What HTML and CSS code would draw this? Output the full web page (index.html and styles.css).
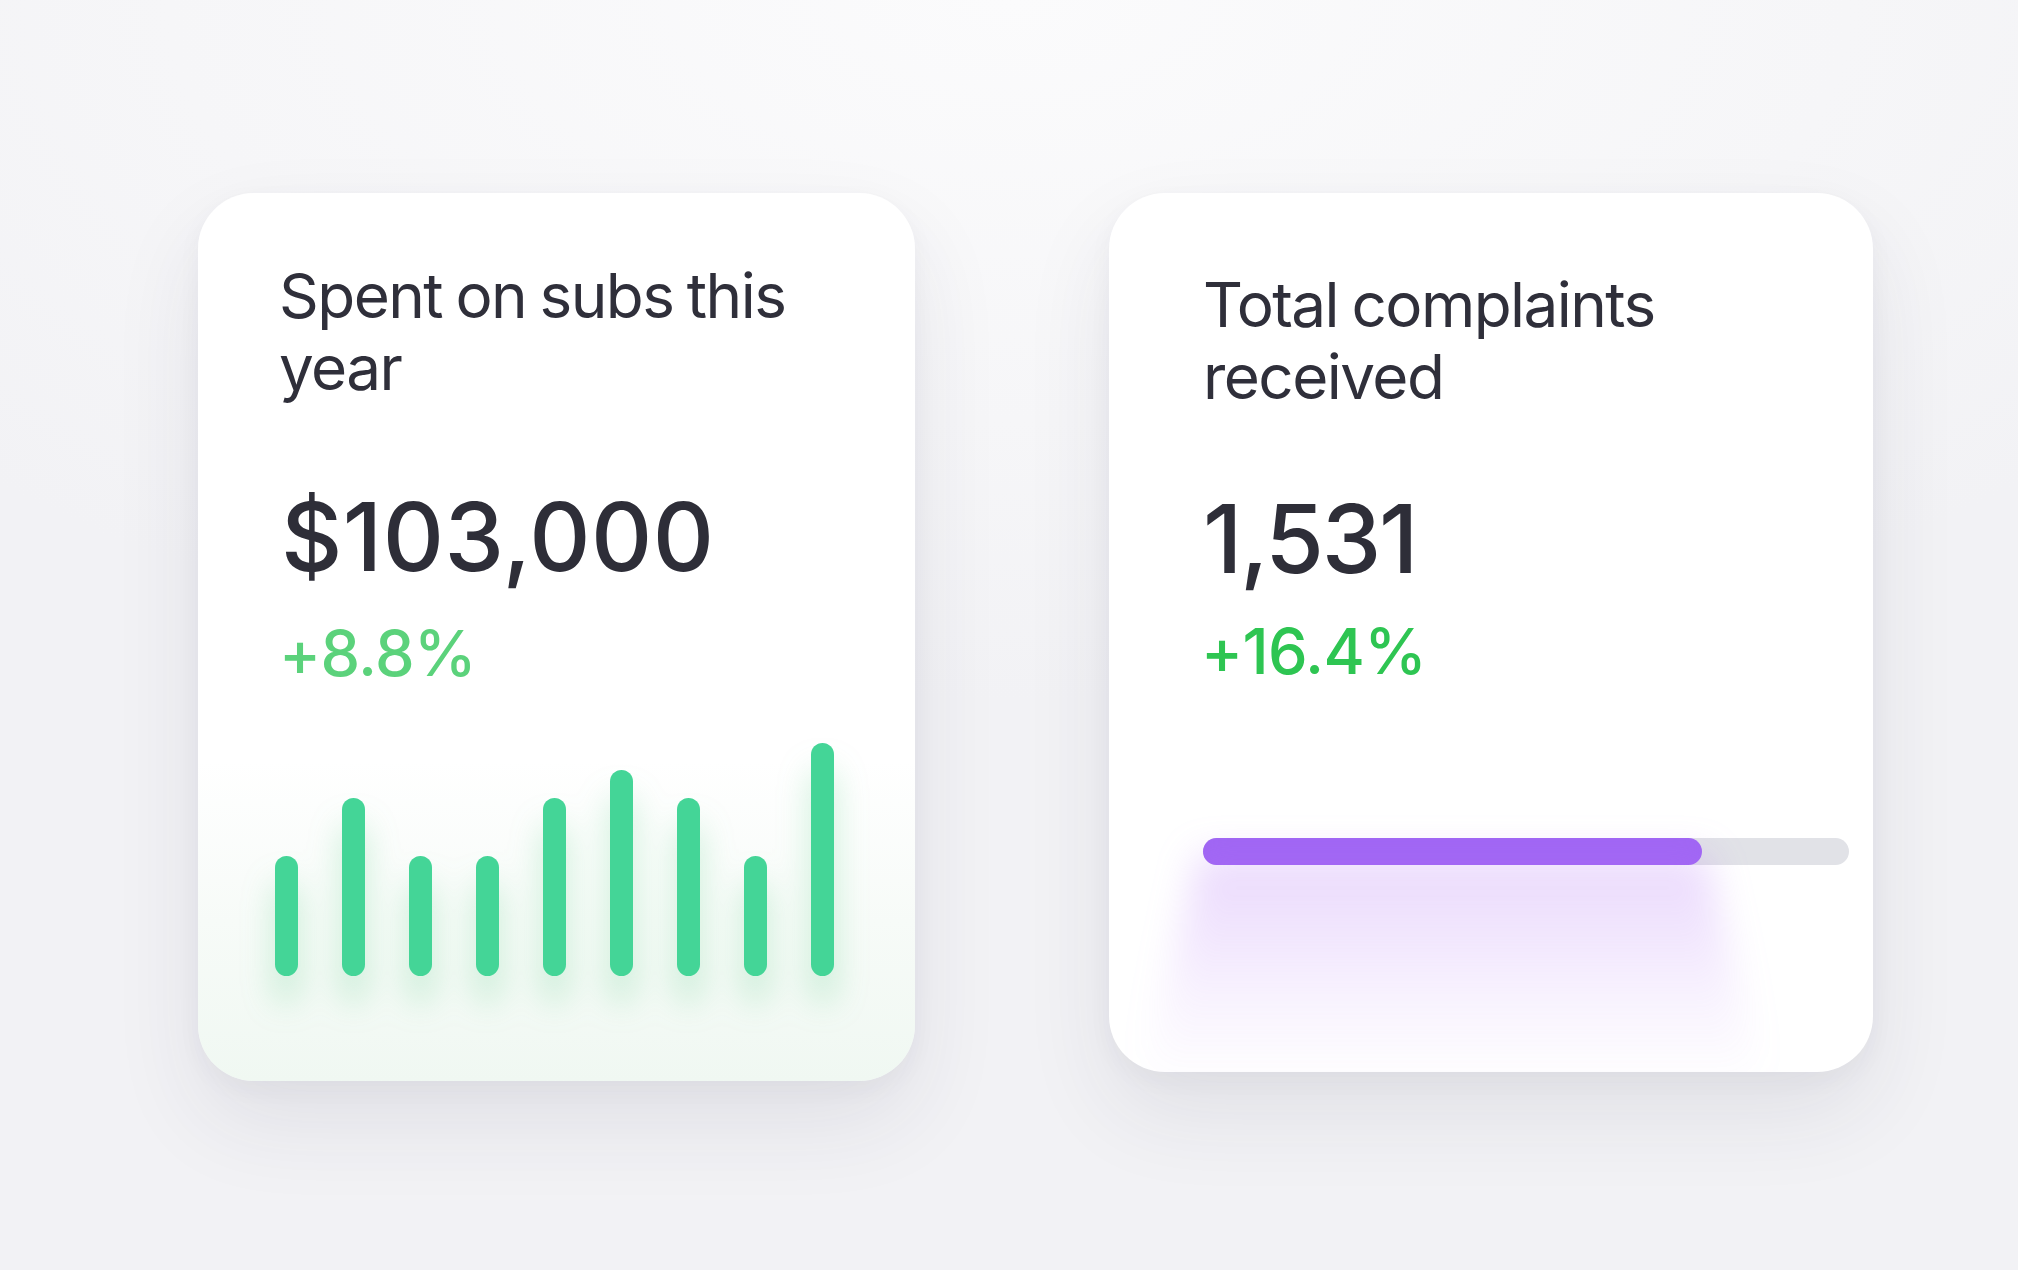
FILE: index.html
```html
<!DOCTYPE html>
<html lang="en">
<head>
<meta charset="utf-8">
<title>Stats</title>
<link rel="stylesheet" href="styles.css">
</head>
<body>
<main class="stage">
  <section class="card card-spend">
    <h2 class="card-title">Spent on subs this year</h2>
    <div class="card-value">$103,000</div>
    <div class="card-delta delta-soft">+8.8%</div>
    <div class="bars">
      <span class="bar" style="height:120px"></span>
      <span class="bar" style="height:178px"></span>
      <span class="bar" style="height:120px"></span>
      <span class="bar" style="height:120px"></span>
      <span class="bar" style="height:178px"></span>
      <span class="bar" style="height:206px"></span>
      <span class="bar" style="height:178px"></span>
      <span class="bar" style="height:120px"></span>
      <span class="bar" style="height:233px"></span>
    </div>
  </section>
  <section class="card card-complaints">
    <h2 class="card-title">Total complaints received</h2>
    <div class="card-value">1,531</div>
    <div class="card-delta delta-strong">+16.4%</div>
    <div class="progress">
      <div class="progress-fill" style="width:77.2%"><span class="progress-glow"></span></div>
    </div>
  </section>
</main>
</body>
</html>
```

FILE: styles.css
```css
html, body {
  margin: 0;
  padding: 0;
}

body {
  width: 2018px;
  height: 1270px;
  overflow: hidden;
  background: radial-gradient(ellipse 1400px 700px at 50% 0%, #fbfbfc 0%, #f6f6f8 60%, #f2f2f5 100%);
  font-family: "Inter", "Noto Sans", sans-serif;
  color: #2f2f3a;
}

.stage {
  display: flex;
  align-items: flex-start;
  gap: 194px;
  padding: 193px 0 0 198px;
}

.card {
  box-sizing: border-box;
  position: relative;
  background: #ffffff;
  border-radius: 56px;
  display: flex;
  flex-direction: column;
  box-shadow: 0 40px 90px rgba(40, 40, 80, 0.09), 0 8px 24px rgba(40, 40, 80, 0.04);
  overflow: hidden;
}

.card-spend {
  width: 717px;
  height: 888px;
  padding: 67px 81px 0 81px;
  background: linear-gradient(180deg, #ffffff 0%, #ffffff 64%, #f7fbf8 82%, #f0f8f2 100%);
}

.card-complaints {
  width: 764px;
  height: 879px;
  padding: 76px 24px 0 94px;
}

.card-title {
  margin: 0;
  font-size: 62px;
  line-height: 72px;
  font-weight: 400;
  letter-spacing: -0.025em;
  word-spacing: -0.04em;
  color: #2f2f3a;
}

.card-spend .card-title {
  padding-right: 30px;
}

.card-complaints .card-title {
  padding-right: 60px;
}

.card-value {
  font-size: 95px;
  line-height: 104px;
  font-weight: 500;
  color: #2e2e38;
}

.card-spend .card-value {
  margin-top: 81px;
  margin-left: 2px;
  letter-spacing: 0.005em;
}

.card-complaints .card-value {
  margin-top: 74px;
  letter-spacing: -0.025em;
}

.card-delta {
  font-size: 63px;
  line-height: 76px;
  font-weight: 500;
  letter-spacing: -0.01em;
}

.card-spend .card-delta {
  margin-top: 26px;
  margin-left: 0;
}

.card-complaints .card-delta {
  margin-top: 22px;
  margin-left: -2px;
}

.delta-soft {
  color: #5bd27b;
}

.delta-strong {
  color: #2ec552;
}

.bars {
  margin-top: 52px;
  margin-left: -4px;
  height: 233px;
  display: flex;
  align-items: flex-end;
  gap: 44px;
  filter: drop-shadow(0 26px 16px rgba(70, 200, 120, 0.28));
}

.bar {
  display: block;
  width: 23px;
  border-radius: 12px;
  background: #44d597;
}

.progress {
  margin-top: 149px;
  height: 27px;
  border-radius: 14px;
  background: #e1e2e7;
  display: flex;
}

.progress-fill {
  position: relative;
  z-index: 1;
  height: 100%;
  border-radius: 14px;
  background: #a066f4;
}

.progress-glow {
  position: absolute;
  z-index: -1;
  left: -60px;
  right: -60px;
  top: 60%;
  height: 230px;
  filter: blur(18px);
  pointer-events: none;
}

.progress-glow::after {
  content: "";
  position: absolute;
  inset: 0;
  background: linear-gradient(180deg, rgba(176, 110, 246, 0.26) 0%, rgba(176, 110, 246, 0.2) 25%, rgba(176, 110, 246, 0.08) 65%, rgba(176, 110, 246, 0) 100%);
  clip-path: polygon(9% 0, 91% 0, 100% 100%, 0 100%);
}
```
